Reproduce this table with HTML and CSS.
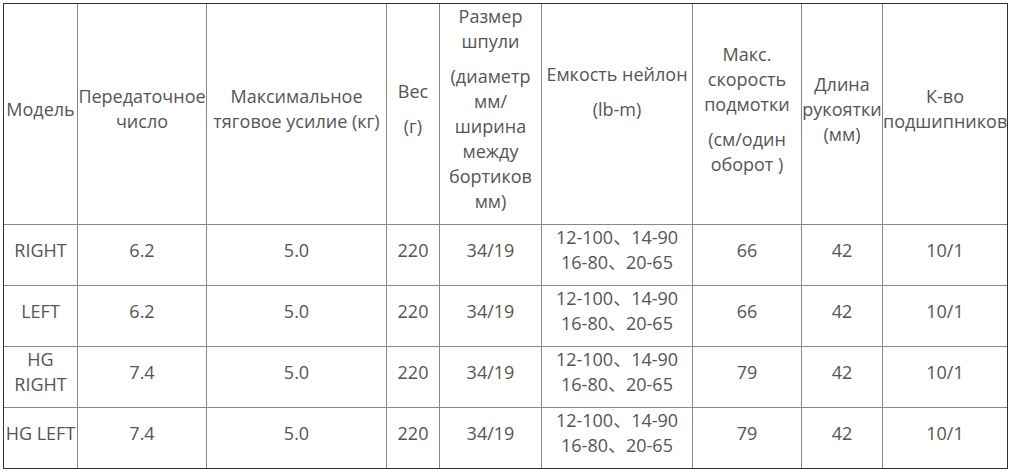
FILE: index.html
```html
<!DOCTYPE html>
<html lang="ru">
<head>
<meta charset="utf-8">
<title>Характеристики</title>
<link rel="stylesheet" href="styles.css">
</head>
<body>
<div class="page">
<table class="spec">
  <colgroup>
    <col class="c1"><col class="c2"><col class="c3"><col class="c4"><col class="c5"><col class="c6"><col class="c7"><col class="c8"><col class="c9">
  </colgroup>
  <tr class="head">
    <td><p>Модель</p></td>
    <td><p>Передаточное число</p></td>
    <td><p>Максимальное тяговое усилие (кг)</p></td>
    <td><p>Вес</p><p>(г)</p></td>
    <td><p>Размер шпули</p><p>(диаметр мм/ ширина между бортиков мм)</p></td>
    <td><p>Емкость нейлон</p><p>(lb-m)</p><p>&nbsp;</p></td>
    <td><p>Макс. скорость подмотки</p><p>(см/один оборот )</p></td>
    <td><p>Длина рукоятки (мм)</p></td>
    <td><p>К-во подшипников</p></td>
  </tr>
  <tr>
    <td><p>RIGHT</p></td><td><p>6.2</p></td><td><p>5.0</p></td><td><p>220</p></td><td><p>34/19</p></td>
    <td><p>12-100、14-90<br>16-80、20-65</p></td><td><p>66</p></td><td><p>42</p></td><td><p>10/1</p></td>
  </tr>
  <tr>
    <td><p>LEFT</p></td><td><p>6.2</p></td><td><p>5.0</p></td><td><p>220</p></td><td><p>34/19</p></td>
    <td><p>12-100、14-90<br>16-80、20-65</p></td><td><p>66</p></td><td><p>42</p></td><td><p>10/1</p></td>
  </tr>
  <tr>
    <td><p>HG RIGHT</p></td><td><p>7.4</p></td><td><p>5.0</p></td><td><p>220</p></td><td><p>34/19</p></td>
    <td><p>12-100、14-90<br>16-80、20-65</p></td><td><p>79</p></td><td><p>42</p></td><td><p>10/1</p></td>
  </tr>
  <tr>
    <td><p>HG LEFT</p></td><td><p>7.4</p></td><td><p>5.0</p></td><td><p>220</p></td><td><p>34/19</p></td>
    <td><p>12-100、14-90<br>16-80、20-65</p></td><td><p>79</p></td><td><p>42</p></td><td><p>10/1</p></td>
  </tr>
</table>
</div>
</body>
</html>
```
FILE: styles.css
```css
html, body {
  margin: 0;
  padding: 0;
  background: #fff;
}
.page {
  padding: 3px;
}
.spec {
  box-sizing: border-box;
  width: 1005px;
  table-layout: fixed;
  border-collapse: separate;
  border-spacing: 0;
  border: 1px solid #333;
  font-family: "Open Sans", "Noto Sans CJK SC", sans-serif;
  font-size: 18px;
  line-height: 25px;
  color: #555;
}
.c1 { width: 74px; }
.c2 { width: 129px; }
.c3 { width: 180px; }
.c4 { width: 53px; }
.c5 { width: 102px; }
.c6 { width: 151px; }
.c7 { width: 109px; }
.c8 { width: 81px; }
.c9 { width: 124px; }
.spec td {
  padding: 0;
  text-align: center;
  vertical-align: middle;
  border-right: 1px solid #888;
  border-bottom: 1px solid #888;
}
.spec td:last-child {
  border-right: none;
}
.spec tr:last-child td {
  border-bottom: none;
}
.spec p {
  margin: 0 0 10px;
}
```
